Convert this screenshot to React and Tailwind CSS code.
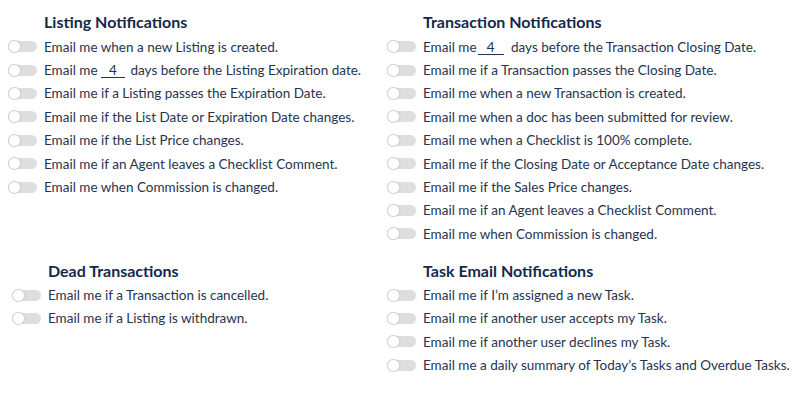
import React, { useState } from 'react';

const FONT = { fontFamily: 'Lato, "Open Sans", sans-serif' };

function Toggle() {
  const [on, setOn] = useState(false);
  return (
    <button
      className={
        'relative w-[29px] h-[11px] rounded-full shrink-0 focus:outline-none ' +
        (on ? 'bg-[#9bb4e0]' : 'bg-[#dedede]')
      }
      onClick={() => setOn((v) => !v)}
    >
      <span
        className={
          'absolute top-[-1px] w-[13px] h-[13px] rounded-full bg-white border border-[#d4d4d4] shadow-[0_0_1px_rgba(0,0,0,0.15)] ' +
          (on ? 'left-[16px]' : 'left-0')
        }
      />
    </button>
  );
}

function DaysInput({ className = '' }) {
  return (
    <span
      className={
        'inline-block text-center border-b border-[#27344f] leading-[14px] ' +
        className
      }
    >
      4
    </span>
  );
}

function Row({ children }) {
  return (
    <div className="flex items-center h-[23.4px] gap-[7px]">
      <Toggle />
      <div className="whitespace-nowrap">{children}</div>
    </div>
  );
}

function Section({ title, rows, className = '' }) {
  return (
    <div className={className}>
      <div className="h-5 flex items-center pl-9 text-[16px] font-bold text-[#15294b] mb-[3px]">
        {title}
      </div>
      {rows.map((r, i) => (
        <Row key={i}>{r}</Row>
      ))}
    </div>
  );
}

const listing = [
  'Email me when a new Listing is created.',
  <>
    Email me <DaysInput className="w-[24px] mr-[2px]" /> days before the
    Listing Expiration date.
  </>,
  'Email me if a Listing passes the Expiration Date.',
  'Email me if the List Date or Expiration Date changes.',
  'Email me if the List Price changes.',
  'Email me if an Agent leaves a Checklist Comment.',
  'Email me when Commission is changed.',
];

const transaction = [
  <>
    Email me<DaysInput className="w-[26px] ml-[1px] mr-[4px]" /> days before
    the Transaction Closing Date.
  </>,
  'Email me if a Transaction passes the Closing Date.',
  'Email me when a new Transaction is created.',
  'Email me when a doc has been submitted for review.',
  'Email me when a Checklist is 100% complete.',
  'Email me if the Closing Date or Acceptance Date changes.',
  'Email me if the Sales Price changes.',
  'Email me if an Agent leaves a Checklist Comment.',
  'Email me when Commission is changed.',
];

const dead = [
  'Email me if a Transaction is cancelled.',
  'Email me if a Listing is withdrawn.',
];

const tasks = [
  'Email me if I\u2019m assigned a new Task.',
  'Email me if another user accepts my Task.',
  'Email me if another user declines my Task.',
  'Email me a daily summary of Today\u2019s Tasks and Overdue Tasks.',
];

export default function App() {
  return (
    <div
      className="w-[800px] h-[400px] bg-white text-[13.5px] text-[#27344f] pt-3 overflow-hidden"
      style={FONT}
    >
      <div className="grid grid-cols-[387px_1fr]">
        <Section title="Listing Notifications" rows={listing} className="pl-2" />
        <Section title="Transaction Notifications" rows={transaction} />
      </div>
      <div className="grid grid-cols-[387px_1fr] mt-[15px]">
        <Section title="Dead Transactions" rows={dead} className="pl-3" />
        <Section title="Task Email Notifications" rows={tasks} />
      </div>
    </div>
  );
}
